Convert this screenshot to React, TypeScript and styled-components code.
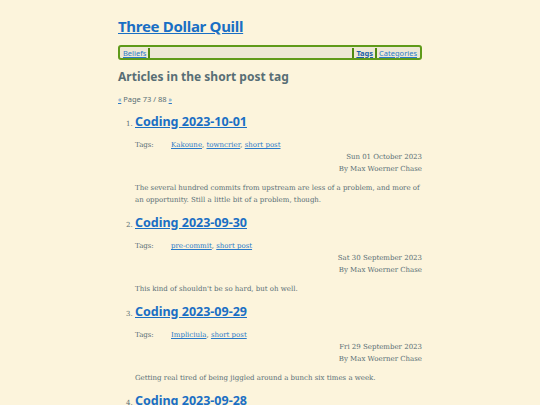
import React from "react";
import styled, { createGlobalStyle } from "styled-components";

const Global = createGlobalStyle`
  html, body { margin: 0; padding: 0; background: #fcf4dc; }
  body { font-family: "DejaVu Serif", serif; color: #586e75; }
  a { color: #2a7ac8; }
`;

const Page = styled.div`
  width: 304px;
  margin: 0 auto;
  padding-top: 15px;
`;

const SiteTitle = styled.h1`
  margin: 0;
  font-family: "Noto Sans", sans-serif;
  font-weight: 700;
  font-size: 15px;
  letter-spacing: -0.3px;
  line-height: 22px;
  a { color: #1a6fc4; }
`;

const Nav = styled.nav`
  margin-top: 8px;
  display: flex;
  align-items: center;
  height: 11px;
  border: 2px solid #5f9a1a;
  border-radius: 3px;
  background: #eee8d5;
  padding: 0 2px;
  font-family: "Noto Sans", sans-serif;
  font-size: 7.5px;
`;

const NavLink = styled.a<{ $current?: boolean }>`
  font-weight: ${(p) => (p.$current ? 700 : 400)};
  color: ${(p) => (p.$current ? "#1a5fa8" : "#2a7ac8")};
  padding: 0 1px;
`;

const Sep = styled.span`
  width: 2px;
  height: 10px;
  background: #4f8a12;
  margin: 0 1px;
`;

const Spacer = styled.span`
  flex: 1;
`;

const Heading = styled.h2`
  margin: 9px 0 0;
  font-family: "Noto Sans", sans-serif;
  font-weight: 700;
  font-size: 12px;
  line-height: 16px;
  color: #586e75;
`;

const Pager = styled.p`
  margin: 9px 0 0;
  font-family: "Noto Sans", sans-serif;
  font-size: 7.5px;
  line-height: 10px;
  a { font-size: 6.5px; }
`;

const List = styled.ol`
  margin: 8px 0 0;
  padding: 0 0 0 17px;
  font-size: 7px;
`;

const Item = styled.li`
  margin-bottom: 8px;
  &::marker { font-size: 7px; color: #586e75; }
`;

const ItemTitle = styled.h3`
  margin: 0;
  font-family: "Noto Sans", sans-serif;
  font-weight: 700;
  font-size: 12.5px;
  line-height: 18px;
  display: inline;
  a { color: #1a6fc4; }
`;

const Meta = styled.div`
  margin-top: 8px;
  font-size: 7px;
  line-height: 12px;
`;

const TagRow = styled.div`
  display: flex;
`;

const TagLabel = styled.span`
  width: 36px;
`;

const Right = styled.div`
  text-align: right;
`;

const Summary = styled.p`
  margin: 7px 0 0;
  font-size: 7px;
  line-height: 12px;
`;

type Post = { title: string; tags: string[]; date: string; summary: string };

const posts: Post[] = [
  {
    title: "Coding 2023-10-01",
    tags: ["Kakoune", "towncrier", "short post"],
    date: "Sun 01 October 2023",
    summary:
      "The several hundred commits from upstream are less of a problem, and more of an opportunity. Still a little bit of a problem, though.",
  },
  {
    title: "Coding 2023-09-30",
    tags: ["pre-commit", "short post"],
    date: "Sat 30 September 2023",
    summary: "This kind of shouldn't be so hard, but oh well.",
  },
  {
    title: "Coding 2023-09-29",
    tags: ["Impliciula", "short post"],
    date: "Fri 29 September 2023",
    summary: "Getting real tired of being jiggled around a bunch six times a week.",
  },
  {
    title: "Coding 2023-09-28",
    tags: ["short post"],
    date: "Thu 28 September 2023",
    summary: "",
  },
];

export default function App() {
  return (
    <>
      <Global />
      <Page>
        <SiteTitle>
          <a href="#">Three Dollar Quill</a>
        </SiteTitle>
        <Nav>
          <NavLink href="#">Beliefs</NavLink>
          <Sep />
          <Spacer />
          <Sep />
          <NavLink href="#" $current>
            Tags
          </NavLink>
          <Sep />
          <NavLink href="#">Categories</NavLink>
        </Nav>
        <Heading>Articles in the short post tag</Heading>
        <Pager>
          <a href="#">«</a> Page 73 / 88 <a href="#">»</a>
        </Pager>
        <List>
          {posts.map((p) => (
            <Item key={p.title}>
              <ItemTitle>
                <a href="#">{p.title}</a>
              </ItemTitle>
              <Meta>
                <TagRow>
                  <TagLabel>Tags:</TagLabel>
                  <span>
                    {p.tags.map((t, i) => (
                      <React.Fragment key={t}>
                        <a href="#">{t}</a>
                        {i < p.tags.length - 1 ? ", " : ""}
                      </React.Fragment>
                    ))}
                  </span>
                </TagRow>
                <Right>{p.date}</Right>
                <Right>By Max Woerner Chase</Right>
              </Meta>
              {p.summary && <Summary>{p.summary}</Summary>}
            </Item>
          ))}
        </List>
      </Page>
    </>
  );
}
